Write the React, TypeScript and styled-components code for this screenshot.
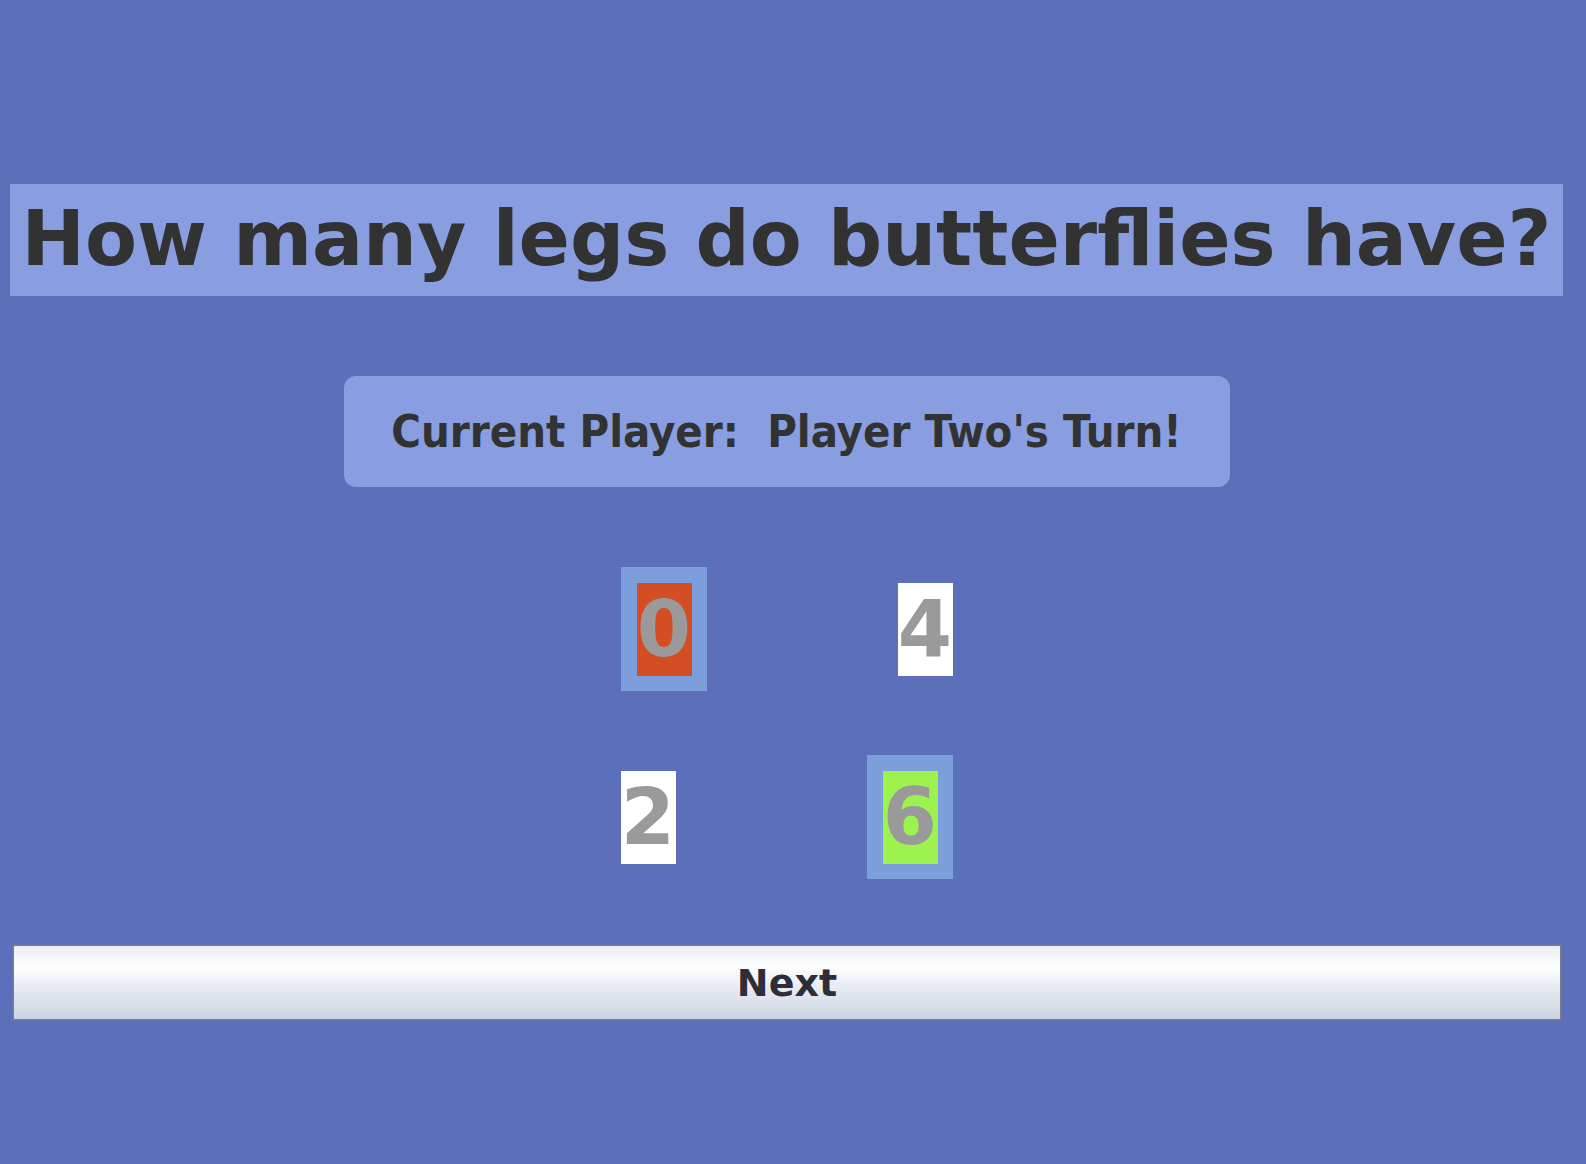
import React from "react";
import styled, { createGlobalStyle } from "styled-components";

const Global = createGlobalStyle`
  html, body {
    margin: 0;
    padding: 0;
    background: #5b6fba;
  }
  body {
    font-family: "DejaVu Sans", "Liberation Sans", sans-serif;
  }
`;

const Page = styled.div`
  width: 1553px;
  margin-left: 10px;
  padding-top: 184px;
  display: flex;
  flex-direction: column;
  min-height: 980px;
`;

const Question = styled.div`
  background: #899ee0;
  color: #333232;
  font-family: "DejaVu Sans", sans-serif;
  font-weight: bold;
  font-size: 75.7px;
  line-height: 87px;
  text-align: center;
  padding: 12px 0 13px;
  white-space: nowrap;
`;

const PlayerBox = styled.div`
  align-self: center;
  width: 886px;
  height: 111px;
  margin-top: 80px;
  background: #899ee0;
  border-radius: 12px;
  display: flex;
  align-items: center;
  justify-content: center;
  color: #333232;
  font-family: "DejaVu Sans Condensed", "DejaVu Sans", sans-serif;
  font-stretch: condensed;
  font-weight: bold;
  font-size: 45px;
  white-space: pre;
`;

const Answers = styled.div`
  margin-top: 80px;
  display: grid;
  justify-content: center;
  grid-template-columns: 86px 86px;
  grid-auto-rows: 124px;
  column-gap: 160px;
  row-gap: 64px;
`;

const Cell = styled.div<{ $col: number; $selected: boolean }>`
  justify-self: ${(p) => (p.$col === 0 ? "start" : "end")};
  align-self: center;
  padding: ${(p) => (p.$selected ? "16px 15px 15px 16px" : "0")};
  background: ${(p) => (p.$selected ? "#7c9fdc" : "transparent")};
  display: flex;
`;

const Card = styled.div<{ $bg: string }>`
  width: 55px;
  height: 93px;
  background: ${(p) => p.$bg};
  color: #9a9a9a;
  font-family: "DejaVu Sans", sans-serif;
  font-weight: bold;
  font-size: 78px;
  line-height: 93px;
  text-align: center;
  overflow: hidden;
`;

const NextButton = styled.button`
  margin: 66px 2px 0 3px;
  height: 75px;
  border: 1px solid #7d7f86;
  box-shadow: 0 0 0 1px rgba(120, 124, 135, 0.35);
  background: linear-gradient(
    to bottom,
    #e9edf3 0%,
    #ffffff 28%,
    #eceff5 50%,
    #d8dee9 80%,
    #c9d2e3 100%
  );
  color: #2e2d3a;
  font-family: "DejaVu Sans", sans-serif;
  font-weight: bold;
  font-size: 38px;
  padding: 0;
  cursor: pointer;
`;

const answers = [
  { label: "0", bg: "#d54e23", selected: true },
  { label: "4", bg: "#ffffff", selected: false },
  { label: "2", bg: "#ffffff", selected: false },
  { label: "6", bg: "#9cf24f", selected: true },
];

export default function App() {
  return (
    <>
      <Global />
      <Page>
        <Question>How many legs do butterflies have?</Question>
        <PlayerBox>Current Player:  Player Two's Turn!</PlayerBox>
        <Answers>
          {answers.map((a, i) => (
            <Cell key={a.label} $col={i % 2} $selected={a.selected}>
              <Card $bg={a.bg}>{a.label}</Card>
            </Cell>
          ))}
        </Answers>
        <NextButton>Next</NextButton>
      </Page>
    </>
  );
}
